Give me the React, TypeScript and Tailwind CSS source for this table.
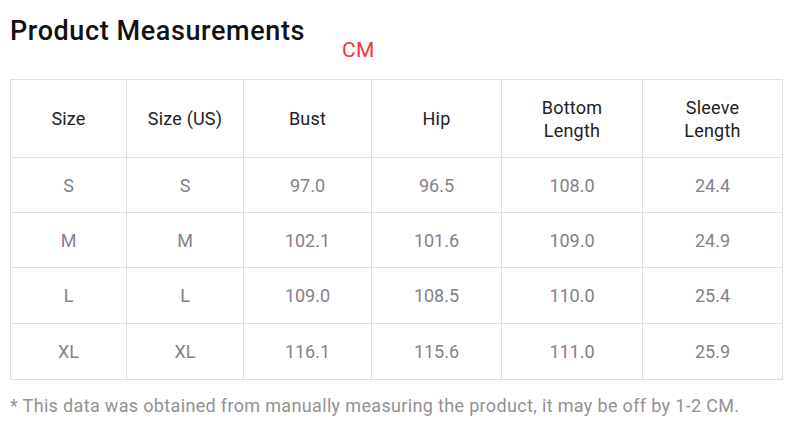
import React from "react";

const headers = ["Size", "Size (US)", "Bust", "Hip", "Bottom\nLength", "Sleeve\nLength"];
const widths = ["w-[116px]", "w-[117px]", "w-[128px]", "w-[130px]", "w-[141px]", "w-[140px]"];
const rows = [
  ["S", "S", "97.0", "96.5", "108.0", "24.4"],
  ["M", "M", "102.1", "101.6", "109.0", "24.9"],
  ["L", "L", "109.0", "108.5", "110.0", "25.4"],
  ["XL", "XL", "116.1", "115.6", "111.0", "25.9"],
];
const rowH = ["h-[55px]", "h-[55px]", "h-[56px]", "h-[56px]"];

export default function App() {
  return (
    <div className="bg-white w-[794px] h-[429px] px-[10px] pt-[15px]" style={{ fontFamily: "Roboto, 'Noto Sans', sans-serif" }}>
      <div className="flex items-end">
        <h2 className="text-[27px] leading-[33px] text-[#111] font-medium tracking-[0.6px]">Product Measurements</h2>
        <span className="ml-[37px] text-[21px] leading-[20px] text-[#f0353e] mb-[-12px] tracking-[0.3px]">CM</span>
      </div>
      <table className="mt-[31px] border-collapse table-fixed w-[772px]">
        <thead>
          <tr className="h-[78px]">
            {headers.map((h, i) => (
              <th key={i} className={`${widths[i]} border border-[#dedede] font-normal text-[18px] leading-[23px] text-[#222] whitespace-pre-line text-center tracking-[0.2px]`}>
                {h}
              </th>
            ))}
          </tr>
        </thead>
        <tbody>
          {rows.map((r, ri) => (
            <tr key={ri} className={rowH[ri]}>
              {r.map((c, ci) => (
                <td key={ci} className="border border-[#dedede] text-center text-[18px] text-[#82828a]">
                  {c}
                </td>
              ))}
            </tr>
          ))}
        </tbody>
      </table>
      <p className="mt-[14px] text-[18px] leading-[24px] text-[#929292] tracking-[0.34px]">
        * This data was obtained from manually measuring the product, it may be off by 1-2 CM.
      </p>
    </div>
  );
}
